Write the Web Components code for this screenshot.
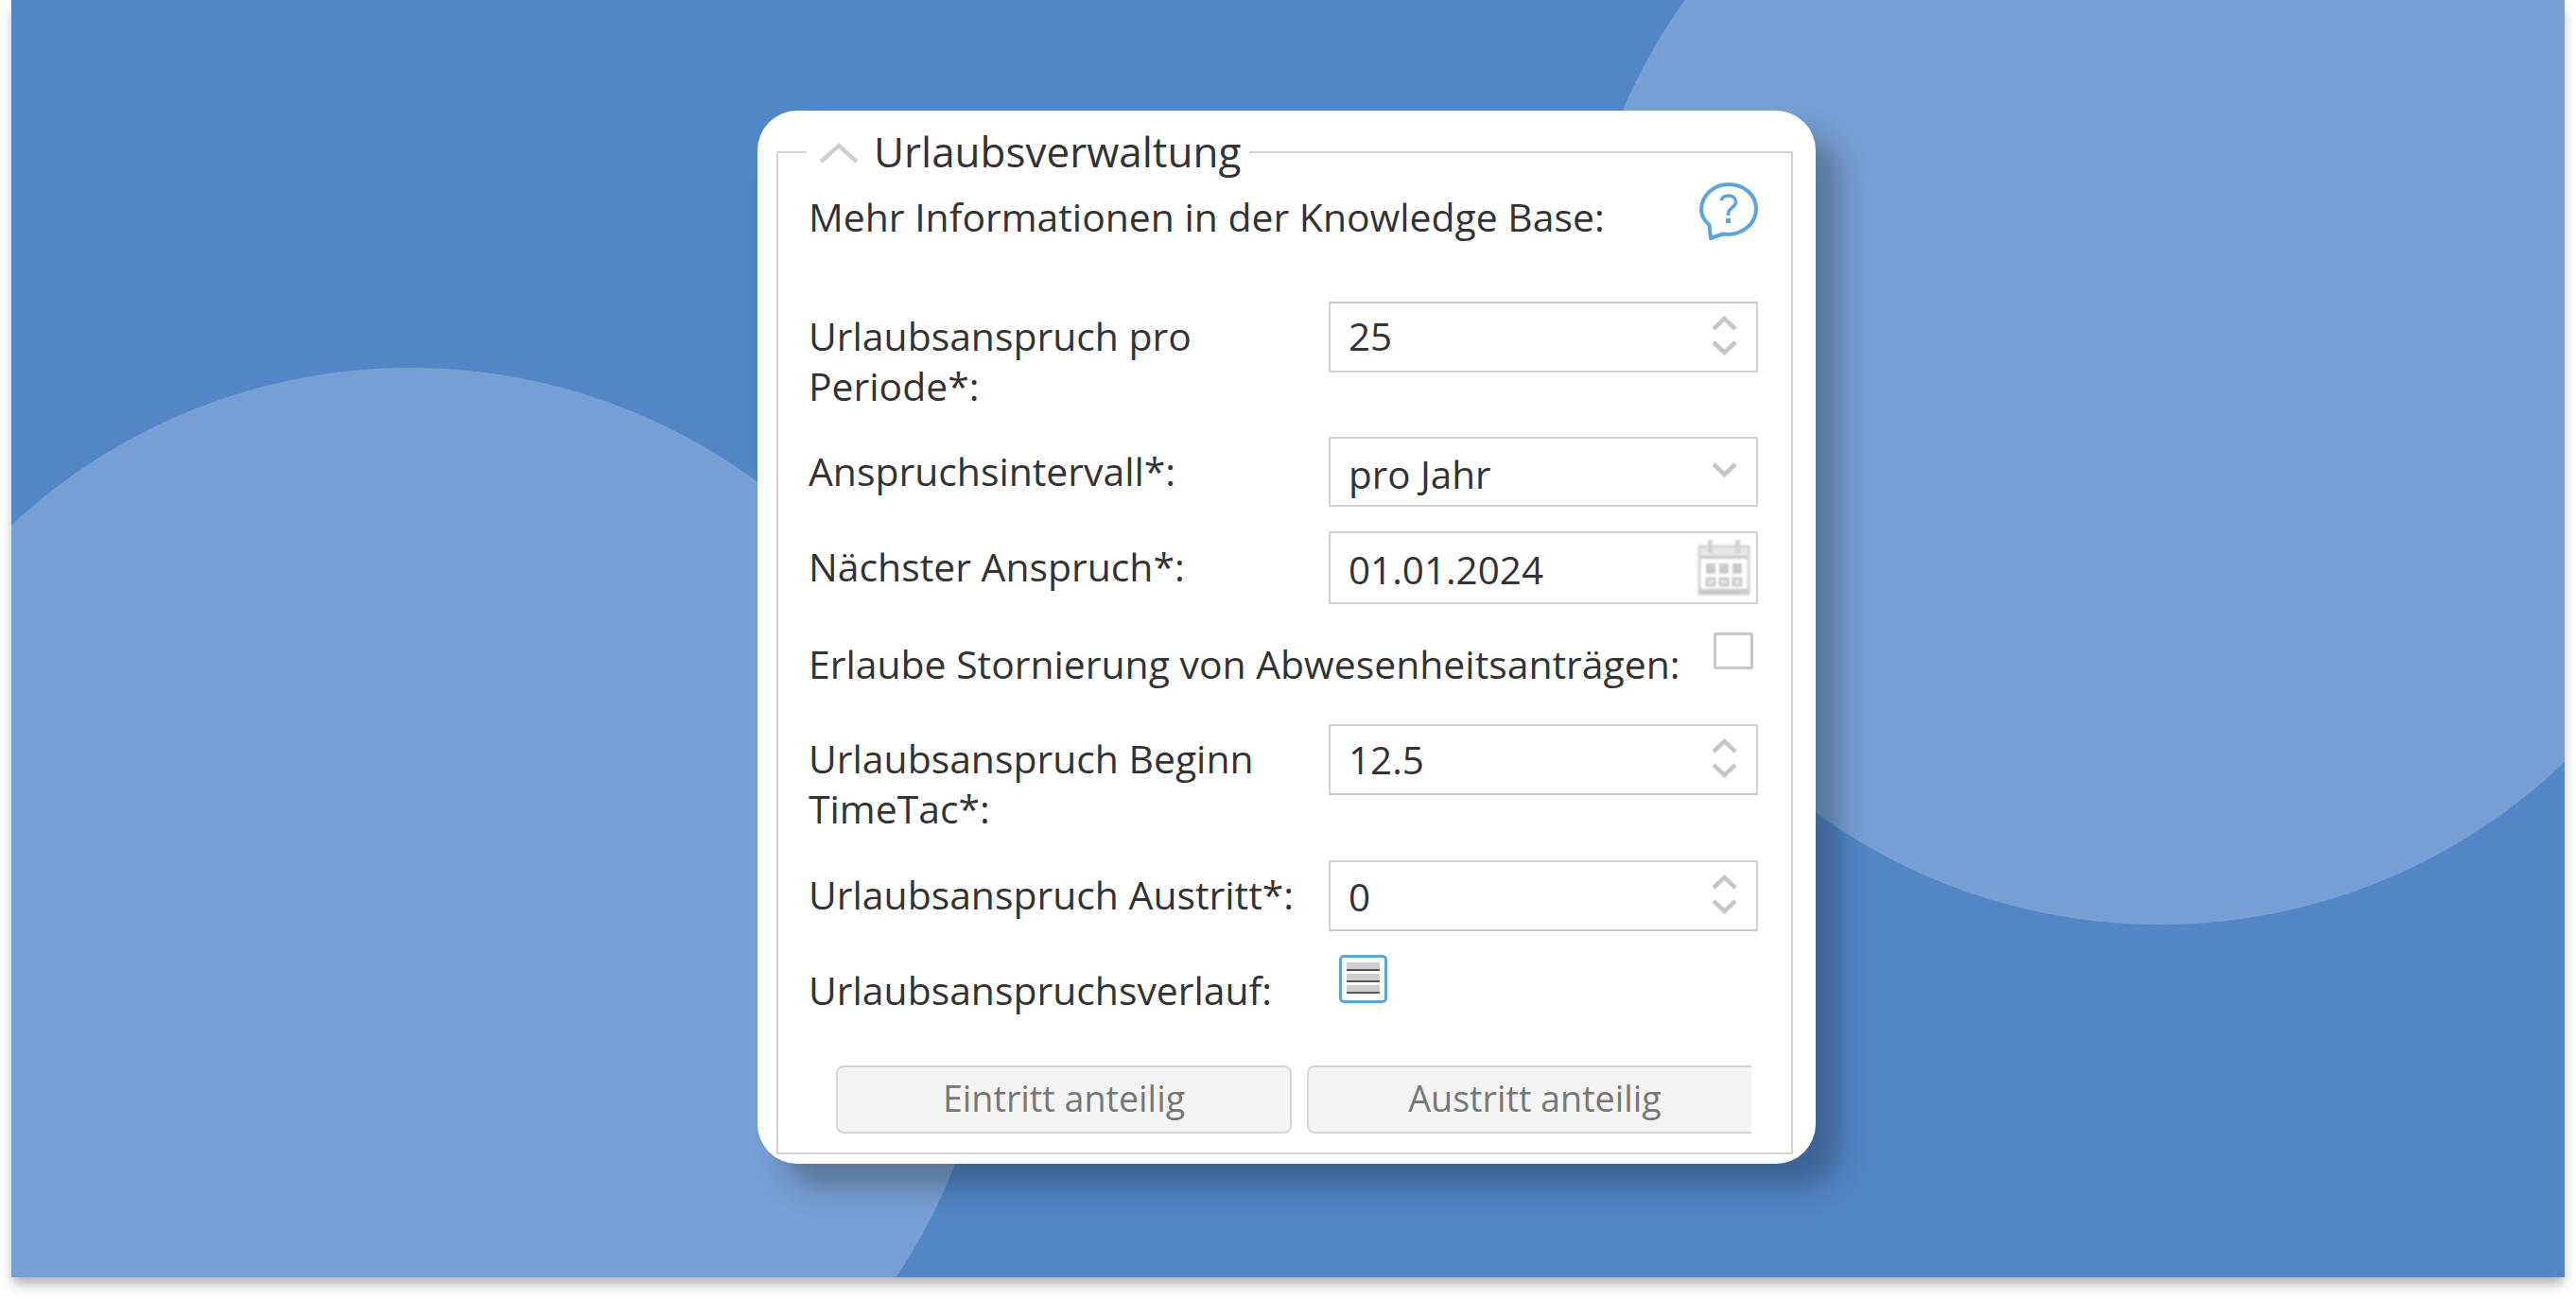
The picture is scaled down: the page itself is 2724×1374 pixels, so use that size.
<!DOCTYPE html>
<html lang="de">
<head>
<meta charset="utf-8">
<title>Urlaubsverwaltung</title>
<style>
	html, body { margin: 0; background: #fff; }
	body { min-height: 1374px; font-family: "Open Sans", sans-serif; font-size: 40px; line-height: 53px; color: #333; }
</style>
</head>
<body>
<blue-scene>
	<vacation-panel heading="Urlaubsverwaltung">
		<form-row wide style="--pad:11px;margin-top:2px">
			Mehr Informationen in der Knowledge Base:
			<help-icon slot="control"></help-icon>
		</form-row>
		<form-row style="--pad:10px;margin-top:63px">
			Urlaubsanspruch pro Periode*:
			<number-field slot="control" value="25" style="--top:8px"></number-field>
		</form-row>
		<form-row style="--pad:10px;margin-top:27px">
			Anspruchsintervall*:
			<select-field slot="control" value="pro Jahr"></select-field>
		</form-row>
		<form-row style="--pad:11px;margin-top:26px">
			Nächster Anspruch*:
			<date-field slot="control" value="01.01.2024"></date-field>
		</form-row>
		<form-row wide style="--pad:7px;margin-top:30px">
			Erlaube Stornierung von Abwesenheitsanträgen:
			<check-box slot="control"></check-box>
		</form-row>
		<form-row style="--pad:10px;margin-top:37px">
			Urlaubsanspruch Beginn TimeTac*:
			<number-field slot="control" value="12.5" style="--top:9px"></number-field>
		</form-row>
		<form-row style="--pad:10px;margin-top:28px">
			Urlaubsanspruch Austritt*:
			<number-field slot="control" value="0" style="--top:10px"></number-field>
		</form-row>
		<form-row style="--pad:11px;margin-top:25px">
			Urlaubsanspruchsverlauf:
			<list-icon slot="control"></list-icon>
		</form-row>
		<button-bar>
			<soft-button>Eintritt anteilig</soft-button>
			<soft-button>Austritt anteilig</soft-button>
		</button-bar>
	</vacation-panel>
</blue-scene>

<script>
const CHEVRON = {
	up: `<polyline points="2,14 13.5,3 25,14" fill="none" stroke="#c6c6c6" stroke-width="4.5"/>`,
	down: `<polyline points="2,2 13.5,13 25,2" fill="none" stroke="#c6c6c6" stroke-width="4.5"/>`
};

const FIELD_STYLE = `
	:host { display: block; }
	#box {
		box-sizing: border-box;
		display: flex;
		justify-content: space-between;
		align-items: center;
		width: 454px;
		border: 2px solid #d0d0d0;
		background: #fff;
		padding-left: 19px;
		color: #333;
		font-size: 40.4px;
	}
	#text { align-self: flex-start; padding-top: var(--top, 8px); }
	svg { display: block; flex: none; filter: blur(.6px); }
`;

class BlueScene extends HTMLElement {
	constructor(){
		super();
		this.attachShadow({mode: "open"});
		this.shadowRoot.innerHTML = `
			<style>
				:host {
					display: block;
					box-sizing: border-box;
					width: 2700px;
					height: 1351px;
					margin-left: 12px;
					padding: 117px 0 0 789px;
					background:
						radial-gradient(circle 618px at 422px 1007px, #76a0d3 617.5px, transparent 618.5px),
						radial-gradient(circle 618px at 2272px 360px, #76a0d3 617.5px, transparent 618.5px),
						#5386c7;
					box-shadow: 0 9px 12px -2px rgba(0,0,0,.32);
				}
			</style>
			<slot></slot>
		`;
	}
}

class VacationPanel extends HTMLElement {
	constructor(){
		super();
		this.attachShadow({mode: "open"});
	}
	connectedCallback(){
		const heading = this.getAttribute("heading");
		this.shadowRoot.innerHTML = `
			<style>
				:host {
					display: block;
					box-sizing: border-box;
					width: 1119px;
					height: 1114px;
					padding: 14px 24px 10px 20px;
					background: #fff;
					border-radius: 42px;
					box-shadow: 26px 26px 30px rgba(0,0,0,.25);
				}
				fieldset {
					box-sizing: border-box;
					height: 100%;
					margin: 0;
					padding: 0 35px 0 32px;
					border: 2px solid #d2d2d2;
					min-width: 0;
				}
				legend {
					display: flex;
					align-items: center;
					margin-left: -2px;
					padding: 0 9px 0 13px;
					font-size: 44px;
					line-height: 59px;
					color: #333;
				}
				svg { display: block; margin: 2px 16px 0 0; filter: blur(.6px); }
			</style>
			<fieldset>
				<legend>
					<svg width="42" height="22" viewBox="0 0 42 22"><polyline points="2,20 21,3 40,20" fill="none" stroke="#cfcfcf" stroke-width="4.5"/></svg>
					<span>${heading}</span>
				</legend>
				<slot></slot>
			</fieldset>
		`;
	}
}

class FormRow extends HTMLElement {
	constructor(){
		super();
		this.attachShadow({mode: "open"});
		this.shadowRoot.innerHTML = `
			<style>
				:host {
					display: grid;
					grid-template-columns: 550px 454px;
					align-items: start;
				}
				:host([wide]) { display: flex; justify-content: space-between; }
				#label { padding-top: var(--pad, 10px); max-width: 530px; font-size: 40.9px; }
				:host([wide]) #label { max-width: none; }
			</style>
			<div id="label"><slot></slot></div>
			<slot name="control"></slot>
		`;
	}
}

class NumberField extends HTMLElement {
	constructor(){
		super();
		this.attachShadow({mode: "open"});
	}
	connectedCallback(){
		this.shadowRoot.innerHTML = `
			<style>${FIELD_STYLE}
				#box { height: 75px; padding-right: 20px; }
				#spin { display: flex; flex-direction: column; gap: 10px; margin-bottom: 3px; }
			</style>
			<div id="box">
				<span id="text">${this.getAttribute("value")}</span>
				<div id="spin">
					<svg width="27" height="16" viewBox="0 0 27 16">${CHEVRON.up}</svg>
					<svg width="27" height="16" viewBox="0 0 27 16">${CHEVRON.down}</svg>
				</div>
			</div>
		`;
	}
}

class SelectField extends HTMLElement {
	constructor(){
		super();
		this.attachShadow({mode: "open"});
	}
	connectedCallback(){
		this.shadowRoot.innerHTML = `
			<style>${FIELD_STYLE}
				#box { height: 74px; padding-right: 20px; --top: 11px; }
				svg { margin-bottom: 5px; }
			</style>
			<div id="box">
				<span id="text">${this.getAttribute("value")}</span>
				<svg width="27" height="16" viewBox="0 0 27 16">${CHEVRON.down}</svg>
			</div>
		`;
	}
}

class DateField extends HTMLElement {
	constructor(){
		super();
		this.attachShadow({mode: "open"});
	}
	connectedCallback(){
		this.shadowRoot.innerHTML = `
			<style>${FIELD_STYLE}
				#box { height: 77px; padding-right: 6px; --top: 12px; }
				svg { filter: blur(.8px); }
			</style>
			<div id="box">
				<span id="text">${this.getAttribute("value")}</span>
				<svg width="56" height="59" viewBox="0 0 56 59">
					<rect x="2" y="7" width="52" height="50" fill="#fff" stroke="#d4d4d4" stroke-width="3"/>
					<rect x="3" y="8" width="50" height="9" fill="#e6e6e6"/>
					<rect x="3" y="17" width="50" height="3" fill="#c8c8c8"/>
					<rect x="11" y="0" width="5" height="14" fill="#d2d2d2"/>
					<rect x="40" y="0" width="5" height="14" fill="#d2d2d2"/>
					<g fill="#cacaca">
						<rect x="9" y="25" width="10" height="11"/>
						<rect x="23" y="25" width="10" height="11"/>
						<rect x="37" y="25" width="10" height="11"/>
					</g>
					<g fill="#eee" stroke="#cacaca" stroke-width="3">
						<rect x="10" y="41" width="8" height="7"/>
						<rect x="24" y="41" width="8" height="7"/>
						<rect x="38" y="41" width="8" height="7"/>
					</g>
					<rect x="2" y="52" width="52" height="6" fill="#c8c8c8"/>
				</svg>
			</div>
		`;
	}
}

class CheckBox extends HTMLElement {
	constructor(){
		super();
		this.attachShadow({mode: "open"});
		this.shadowRoot.innerHTML = `
			<style>
				:host {
					display: block;
					box-sizing: border-box;
					width: 42px;
					height: 39px;
					margin-right: 5px;
					border: 3px solid #c8c8c8;
					border-radius: 2px;
					background: #fff;
				}
			</style>
		`;
	}
}

class HelpIcon extends HTMLElement {
	constructor(){
		super();
		this.attachShadow({mode: "open"});
		this.shadowRoot.innerHTML = `
			<style>
				:host { display: block; width: 62px; height: 63px; }
				svg { display: block; filter: blur(.5px); }
			</style>
			<svg width="62" height="63" viewBox="0 0 62 63" fill="none" stroke="#5aa5e0">
				<path stroke-width="4" stroke-linejoin="round" d="M12 60 L10.5 46 C5 41 2 36 2 30 C2 15 15 3 31 3 C47 3 60 14 60 29 C60 44 47 55 31 56 C28.5 56 26.5 55.7 25 55.5 Z"/>
				<path stroke-width="3.5" d="M23 20 C24 16.5 27 15 31 15 C36 15 38.5 18 38.5 21.5 C38.5 25.5 35.5 27 33 29 C31 30.5 30.5 32.5 30.5 36"/>
				<rect x="28" y="39" width="5" height="5" fill="#5aa5e0" stroke="none"/>
			</svg>
		`;
	}
}

class ListIcon extends HTMLElement {
	constructor(){
		super();
		this.attachShadow({mode: "open"});
		this.shadowRoot.innerHTML = `
			<style>
				:host {
					display: flex;
					flex-direction: column;
					gap: 3px;
					box-sizing: border-box;
					width: 51px;
					height: 51px;
					margin-left: 11px;
					padding: 5px 5px 0;
					border: 3px solid #5aa5e0;
					border-radius: 5px;
					background: #fff;
				}
				i { display: block; box-sizing: content-box; height: 7px; border-bottom: 2px solid #555; background: #cdcdcd; }
			</style>
			<i></i><i></i><i></i>
		`;
	}
}

class ButtonBar extends HTMLElement {
	constructor(){
		super();
		this.attachShadow({mode: "open"});
		this.shadowRoot.innerHTML = `
			<style>
				:host {
					display: flex;
					gap: 16px;
					width: 968px;
					margin: 53px 0 0 29px;
					overflow: hidden;
				}
			</style>
			<slot></slot>
		`;
	}
}

class SoftButton extends HTMLElement {
	constructor(){
		super();
		this.attachShadow({mode: "open"});
		this.shadowRoot.innerHTML = `
			<style>
				:host {
					display: flex;
					flex: none;
					align-items: center;
					justify-content: center;
					box-sizing: border-box;
					width: 482px;
					height: 72px;
					padding-bottom: 3px;
					border: 2px solid #d6d6d6;
					border-radius: 8px;
					background: #f4f4f4;
					color: #777;
					font-size: 37.7px;
				}
			</style>
			<slot></slot>
		`;
	}
}

customElements.define("blue-scene", BlueScene);
customElements.define("vacation-panel", VacationPanel);
customElements.define("form-row", FormRow);
customElements.define("number-field", NumberField);
customElements.define("select-field", SelectField);
customElements.define("date-field", DateField);
customElements.define("check-box", CheckBox);
customElements.define("help-icon", HelpIcon);
customElements.define("list-icon", ListIcon);
customElements.define("button-bar", ButtonBar);
customElements.define("soft-button", SoftButton);
</script>
</body>
</html>
